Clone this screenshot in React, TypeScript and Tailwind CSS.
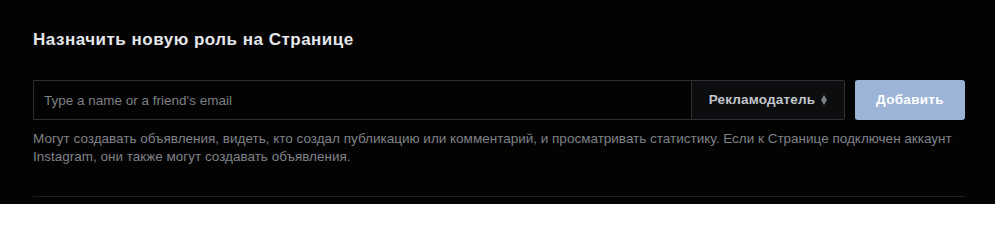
export default function App() {
  return (
    <div className="h-[204px] w-[995px] overflow-hidden bg-[#030303] px-[33px] pt-[30px] font-['Liberation_Sans',Arial,sans-serif]">
      <h2 className="text-[17px] font-bold leading-[20px] tracking-[0.5px] text-[#e4e6eb]">Назначить новую роль на Странице</h2>
      <div className="mt-[30px] flex w-[932px] items-stretch">
        <input
          type="text"
          placeholder="Type a name or a friend's email"
          className="h-[40px] min-w-0 flex-1 border border-[#2c2d30] bg-[#030303] px-[10px] text-[13.5px] text-[#e4e6eb] outline-none placeholder:text-[#7c7f84]"
        />
        <button className="-ml-px flex h-[40px] w-[154px] items-center justify-center gap-[6px] rounded-r-[2px] border border-[#2f3033] bg-[#0c0d0f] text-[13.5px] font-bold tracking-[0.2px] text-[#c3c6cb]">
          Рекламодатель
          <svg width="6" height="10" viewBox="0 0 6 10" className="text-[#7c7f84]">
            <path d="M3 0 L6 5 L3 10 L0 5 Z" fill="currentColor" />
          </svg>
        </button>
        <button className="ml-[10px] h-[40px] w-[110px] rounded-[3px] bg-[#9cb4d8] text-[13.5px] font-bold tracking-[0.3px] text-white">
          Добавить
        </button>
      </div>
      <p className="mt-[10px] w-[932px] text-[13.5px] leading-[18px] text-[#7f8287]">
        Могут создавать объявления, видеть, кто создал публикацию или комментарий, и просматривать статистику. Если к Странице подключен аккаунт Instagram, они также могут создавать объявления.
      </p>
      <div className="mt-[30px] h-px w-[932px] bg-[#1e1f21]" />
    </div>
  );
}
